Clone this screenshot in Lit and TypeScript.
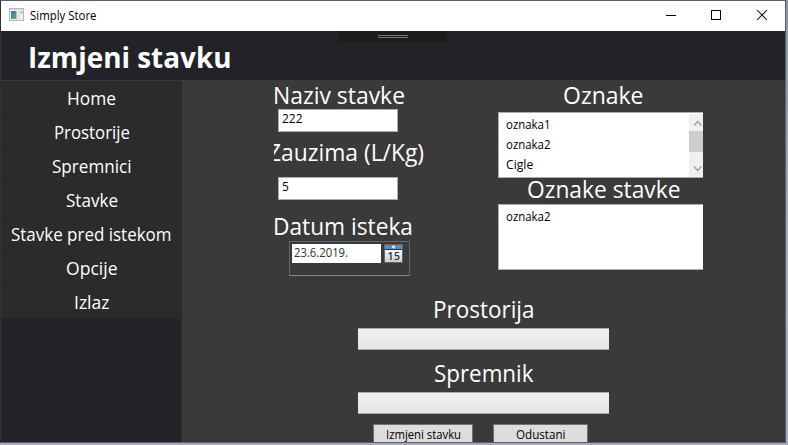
import { LitElement, html, css, svg } from "lit";
import { customElement, property } from "lit/decorators.js";

/** One line of text fitted to an exact advance width. */
@customElement("fit-text")
class FitText extends LitElement {
  @property() text = "";
  @property({ type: Number }) width = 50;
  @property({ type: Number }) size = 12;
  @property({ type: Number }) weight = 400;

  static styles = css`
    :host { display: block; flex: none; }
    svg { display: block; overflow: visible; }
    text { font-family: "Open Sans", "Noto Sans", sans-serif; fill: currentColor; }
  `;

  render() {
    const h = Math.round(this.size * 1.25);
    return html`<svg width=${this.width} height=${h}>
      ${svg`<text x="0" y=${Math.round(this.size)} font-size=${this.size} font-weight=${this.weight}
        textLength=${this.width} lengthAdjust="spacingAndGlyphs">${this.text}</text>`}
    </svg>`;
  }
}

const NAV: [string, number][] = [
  ["Home", 49], ["Prostorije", 76], ["Spremnici", 79.5], ["Stavke", 52],
  ["Stavke pred istekom", 160.5], ["Opcije", 51.5], ["Izlaz", 35.5],
];

@customElement("app-root")
class AppRoot extends LitElement {
  static styles = css`
    :host { display: block; width: 788px; height: 445px; overflow: hidden;
      background: linear-gradient(#8d93a2, #a9aebd 60%, #a5a9b8); }
    * { box-sizing: border-box; }
    .window { width: 786px; height: 443px; border: 1px solid #5d5f68; border-left-color: #303134;
      display: flex; flex-direction: column; background: #3a3a3a; color: #fff; overflow: hidden;
      border-top-color: #5d5d66; position: relative; }
    .edge { position: absolute; left: -1px; top: -1px; width: 358px; height: 1px; background: #211e22; }
    .bar { height: 30px; flex: none; background: #fff; color: #000; display: flex; padding-left: 8px; }
    .appicon { margin: 7px 5.5px 0 0; flex: none; display: block; }
    .bar fit-text { margin-top: 7px; }
    .controls { margin-left: auto; display: flex; }
    .controls svg { display: block; width: 46px; height: 30px; }
    .header { height: 50px; flex: none; background: #222328; border-bottom: 1px solid #3a3a3e;
      padding: 9px 0 0 26.5px; position: relative; }
    .grip { position: absolute; left: 338px; top: 0; width: 108px; height: 11px; background: #1b1c1c;
      display: flex; flex-direction: column; align-items: center; gap: 1px; padding-top: 4px; }
    .grip i { width: 30px; height: 1px; background: #747474; }
    .body { flex: 1; display: flex; min-height: 0; }
    .side { width: 181px; background: #222328; border-right: 1px solid #303031; flex: none; }
    .item { width: 181px; height: 34px; background: #2b2b2b; border-bottom: 1px solid #292929;
      display: flex; justify-content: center; padding-top: 6px; }
    .main { flex: 1; min-width: 0; display: flex; flex-direction: column; margin-top: -1px; }
    .fields { display: flex; height: 214px; flex: none; }
    .left { width: 225px; margin-left: 91px; display: flex; flex-direction: column; align-items: flex-start; }
    .right { width: 205px; display: flex; flex-direction: column; align-items: center; }
    .box { width: 120px; height: 23px; background: #fff; border: 1px solid #abadb3; color: #000;
      padding: 1px 0 0 2.5px; margin-left: 5px; }
    .second { margin-top: 9px; }
    .clip { width: 160px; overflow: hidden; margin: 6px 0 0 1px; height: 30px; display: flex; }
    .clip fit-text { margin: -1px 0 0 -6.5px; }
    .date { width: 121px; height: 35px; border: 1px solid #5e6870; border-bottom-color: #84898f;
      margin: 1px 0 0 16px; padding: 2px 0 0 1.5px; display: flex; gap: 3px; }
    .date .value { width: 89.5px; height: 19px; background: #fff; color: #333; padding: 1px 0 0 2.5px; flex: none; }
    .date svg { display: block; flex: none; }
    .list { width: 205px; height: 66px; background: #fff; border: solid #abadb3; border-width: 1px 0 1px 1px;
      color: #000; display: flex; flex: none; }
    .rows { flex: 1; padding: 4px 0 0 6.5px; }
    .row { height: 20px; }
    .scroll { width: 14px; height: 63px; margin-top: 1px; display: block; }
    .combo { width: 251px; height: 22px; background: linear-gradient(#f0f0f0, #e5e5e5);
      border: solid #acacac; border-width: 1px 0; flex: none; margin-top: 5px; }
    .lower { display: flex; flex-direction: column; align-items: center; width: 251px; margin-left: 176px; }
    .buttons { display: flex; gap: 20px; margin-top: 10px; align-self: flex-start; padding-left: 15px; }
    .btn { height: 22px; background: #ddd; border: 1px solid #707070; color: #000;
      display: flex; justify-content: center; padding-top: 2px; }
    .save { width: 100px; }
    .cancel { width: 95px; }
    .l1 { margin: 0 0 0 -0.5px; }
    .l3 { margin: 11px 0 0 -0.5px; }
    .tags { margin: 0 0 3px 5px; }
    .item-tags { margin: -4px 0 1px 7px; }
    .container { margin-top: 8px; }
  `;

  render() {
    return html`
      <div class="window">
        <div class="edge"></div>
        <div class="bar">
          <svg class="appicon" width="15" height="13" viewBox="0 0 15 13">
            <defs><linearGradient id="g" x2="1" y2="1">
              <stop stop-color="#4878a4"/><stop offset="1" stop-color="#57a684"/></linearGradient></defs>
            <rect width="15" height="13" fill="#b5b8bf"/>
            <rect x="1" y="1" width="13" height="11" fill="#edf0f3"/>
            <rect x="1" y="1" width="13" height="1" fill="#d7dade"/>
            <rect x="2" y="3" width="5.5" height="8" fill="url(#g)"/>
            <rect x="8.5" y="3" width="2.5" height="8" fill="#dfe5ec"/>
            <rect x="11.5" y="3" width="2" height="3" fill="#9fceb0"/>
          </svg>
          <fit-text text="Simply Store" width="66.5" size="11.8"></fit-text>
          <div class="controls">
            <svg><path d="M19 14.5h10" stroke="#000"/></svg>
            <svg><rect x="18.5" y="9.5" width="9" height="9" fill="none" stroke="#000"/></svg>
            <svg><path d="M18 9l10 10M28 9l-10 10" stroke="#000" stroke-width="1.05"/></svg>
          </div>
        </div>
        <div class="header">
          <fit-text text="Izmjeni stavku" width="203.5" size="28.3" weight="700"></fit-text>
          <div class="grip"><i></i><i></i></div>
        </div>
        <div class="body">
          <div class="side">
            ${NAV.map(([t, w]) => html`<div class="item"><fit-text text=${t} width=${w} size="17.6"></fit-text></div>`)}
          </div>
          <div class="main">
            <div class="fields">
              <div class="left">
                <fit-text class="l1" text="Naziv stavke" width="132" size="23.5"></fit-text>
                <div class="box"><fit-text text="222" width="20.5" size="11.8"></fit-text></div>
                <div class="clip"><fit-text text="Zauzima (L/Kg)" width="156" size="23.5"></fit-text></div>
                <div class="box second"><fit-text text="5" width="6.8" size="11.8"></fit-text></div>
                <fit-text class="l3" text="Datum isteka" width="140" size="23.5"></fit-text>
                <div class="date">
                  <div class="value"><fit-text text="23.6.2019." width="54" size="11.8"></fit-text></div>
                  <svg width="19" height="19" viewBox="0 0 19 19">
                    <defs><linearGradient id="c" x2="0" y2="1">
                      <stop stop-color="#fff"/><stop offset="1" stop-color="#c9cbd2"/></linearGradient></defs>
                    <rect width="19" height="19" fill="#626466"/>
                    <rect x="1" y="1" width="17" height="4" fill="#5291c5"/>
                    <rect x="1" y="5" width="17" height="1" fill="#2f3336"/>
                    <rect x="1" y="6" width="17" height="12" fill="url(#c)"/>
                    <circle cx="9.5" cy="3" r="1.4" fill="#fff"/>
                    <text x="3.5" y="16" textLength="12.5" font-family="Open Sans" font-size="10.5" font-weight="600"
                      fill="#333">15</text>
                  </svg>
                </div>
              </div>
              <div class="right">
                <fit-text class="tags" text="Oznake" width="80.5" size="23.5"></fit-text>
                <div class="list">
                  <div class="rows">
                    <div class="row"><fit-text text="oznaka1" width="44.5" size="11.8"></fit-text></div>
                    <div class="row"><fit-text text="oznaka2" width="44.5" size="11.8"></fit-text></div>
                    <div class="row"><fit-text text="Cigle" width="27.3" size="11.8"></fit-text></div>
                  </div>
                  <svg class="scroll">
                    <rect width="14" height="63" fill="#f0f0f0"/>
                    <rect y="17" width="14" height="21" fill="#cdcdcd"/>
                    <path d="M5 11.5l3.7-4 3.7 4M5 52.5l3.7 4 3.7-4" fill="none" stroke="#999" stroke-width="1.2"/>
                  </svg>
                </div>
                <fit-text class="item-tags" text="Oznake stavke" width="153.5" size="23.5"></fit-text>
                <div class="list"><div class="rows">
                  <div class="row"><fit-text text="oznaka2" width="44.5" size="11.8"></fit-text></div>
                </div></div>
              </div>
            </div>
            <div class="lower">
              <fit-text text="Prostorija" width="101.5" size="23.5"></fit-text>
              <div class="combo"></div>
              <fit-text class="container" text="Spremnik" width="99.5" size="23.5"></fit-text>
              <div class="combo"></div>
              <div class="buttons">
                <div class="btn save"><fit-text text="Izmjeni stavku" width="75" size="11.8"></fit-text></div>
                <div class="btn cancel"><fit-text text="Odustani" width="49.5" size="11.8"></fit-text></div>
              </div>
            </div>
          </div>
        </div>
      </div>`;
  }
}
